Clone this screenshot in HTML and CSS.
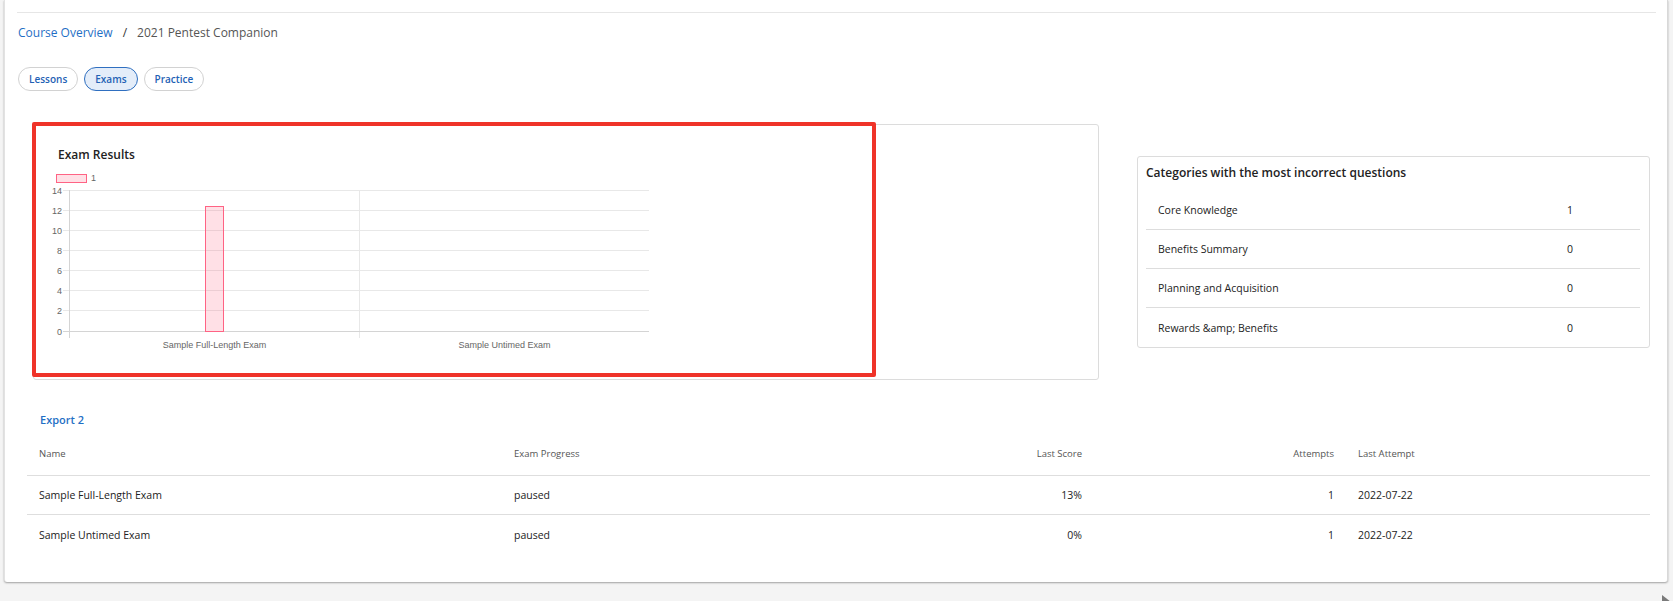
FILE: index.html
```html
<!DOCTYPE html>
<html>
<head>
<meta charset="utf-8">
<title>2021 Pentest Companion - Exams</title>
<link rel="stylesheet" href="styles.css">
</head>
<body>
<div class="page">
  <main class="card">
    <div class="topline"></div>
    <nav class="crumbs">
      <a class="crumb-link">Course Overview</a><span class="sep">/</span><span class="crumb-current">2021 Pentest Companion</span>
    </nav>
    <div class="pills">
      <span class="pill">Lessons</span>
      <span class="pill active">Exams</span>
      <span class="pill">Practice</span>
    </div>

    <div class="stats-row">
      <section class="chart-card">
        <h3 class="chart-title">Exam Results</h3>
        <svg class="chart" width="620" height="195" viewBox="0 0 620 195">
          <rect x="16.5" y="9.5" width="30" height="8" fill="#ffe0e6" stroke="#ff6384" stroke-width="1"/>
          <text class="lbl" x="51" y="16">1</text>
          <g stroke="#e8e8e8" stroke-width="1">
            <line x1="23" y1="25.5" x2="609" y2="25.5"/>
            <line x1="23" y1="45.5" x2="609" y2="45.5"/>
            <line x1="23" y1="65.5" x2="609" y2="65.5"/>
            <line x1="23" y1="85.5" x2="609" y2="85.5"/>
            <line x1="23" y1="105.5" x2="609" y2="105.5"/>
            <line x1="23" y1="125.5" x2="609" y2="125.5"/>
            <line x1="23" y1="145.5" x2="609" y2="145.5"/>
            <line x1="319.5" y1="25" x2="319.5" y2="173"/>
          </g>
          <g stroke="#d4d4d4" stroke-width="1">
            <line x1="23" y1="166.5" x2="609" y2="166.5"/>
            <line x1="29.5" y1="25" x2="29.5" y2="173"/>
          </g>
          <g class="lbl" text-anchor="end">
            <text x="22" y="28.5">14</text>
            <text x="22" y="48.5">12</text>
            <text x="22" y="68.5">10</text>
            <text x="22" y="88.5">8</text>
            <text x="22" y="108.5">6</text>
            <text x="22" y="128.5">4</text>
            <text x="22" y="148.5">2</text>
            <text x="22" y="169.5">0</text>
          </g>
          <rect x="165.5" y="41.5" width="18" height="125" fill="rgba(255,99,132,0.2)" stroke="#ff6384" stroke-width="1"/>
          <g class="lbl" text-anchor="middle">
            <text x="174.5" y="183">Sample Full-Length Exam</text>
            <text x="464.5" y="183">Sample Untimed Exam</text>
          </g>
        </svg>
        <div class="annotation"></div>
      </section>

      <section class="cat-card">
        <h3 class="cat-title">Categories with the most incorrect questions</h3>
        <div class="cat-row"><span class="cat-name">Core Knowledge</span><span class="cat-val">1</span></div>
        <div class="cat-row"><span class="cat-name">Benefits Summary</span><span class="cat-val">0</span></div>
        <div class="cat-row"><span class="cat-name">Planning and Acquisition</span><span class="cat-val">0</span></div>
        <div class="cat-row"><span class="cat-name">Rewards &amp;amp; Benefits</span><span class="cat-val">0</span></div>
      </section>
    </div>

    <div class="exports"><a class="export-link">Export 2</a></div>

    <div class="table">
      <div class="tr th">
        <span class="c-name">Name</span>
        <span class="c-prog">Exam Progress</span>
        <span class="c-score">Last Score</span>
        <span class="c-att">Attempts</span>
        <span class="c-last">Last Attempt</span>
      </div>
      <div class="tr">
        <span class="c-name">Sample Full-Length Exam</span>
        <span class="c-prog">paused</span>
        <span class="c-score">13%</span>
        <span class="c-att">1</span>
        <span class="c-last">2022-07-22</span>
      </div>
      <div class="tr last">
        <span class="c-name">Sample Untimed Exam</span>
        <span class="c-prog">paused</span>
        <span class="c-score">0%</span>
        <span class="c-att">1</span>
        <span class="c-last">2022-07-22</span>
      </div>
    </div>
  </main>
  <div class="corner"></div>
</div>
</body>
</html>
```

FILE: styles.css
```css
* { box-sizing: border-box; }

html, body {
  margin: 0;
  padding: 0;
  background: #f4f4f4;
  font-family: "Open Sans", "Noto Sans", "Liberation Sans", sans-serif;
  color: #222;
}

.page {
  position: relative;
  width: 1673px;
  height: 601px;
  overflow: hidden;
}

.card {
  margin-left: 4px;
  width: 1664px;
  height: 582px;
  background: #fff;
  border-left: 1px solid #e2e2e2;
  border-right: 1px solid #d8d8d8;
  border-radius: 0 0 3px 3px;
  box-shadow: 0 1px 2px rgba(0, 0, 0, 0.35);
  padding: 12px 17px 0 13px;
}

.topline {
  height: 1px;
  background: #e6e6e6;
  margin: 0 -6px 0 -1px;
}

.crumbs {
  margin-top: 12px;
  font-size: 12px;
  line-height: 16px;
  display: flex;
  align-items: center;
}

.crumb-link { color: #1f6fc5; }

.sep {
  color: #333;
  margin: 0 10px;
}

.crumb-current { color: #555; }

.pills {
  margin-top: 26px;
  display: flex;
  gap: 6px;
}

.pill {
  height: 24px;
  line-height: 22px;
  padding: 0 10px;
  border: 1px solid #d2d2d2;
  border-radius: 12px;
  font-size: 10px;
  font-weight: 600;
  color: #1f62b5;
  background: #fff;
}

.pill.active {
  background: #e4edf9;
  border-color: #2f6fc0;
}

.stats-row {
  margin-top: 33px;
  padding-left: 15px;
  display: flex;
  align-items: flex-start;
  gap: 38px;
}

.chart-card {
  position: relative;
  width: 1066px;
  height: 256px;
  border: 1px solid #dcdcdc;
  border-radius: 3px;
  padding: 22px 0 0 6px;
}

.chart-title {
  margin: 0 0 0 18px;
  font-size: 12px;
  font-weight: 600;
  line-height: 16px;
  color: #222;
}

.chart {
  display: block;
  margin-top: 2px;
}

.lbl, .lbl text {
  font-family: "Liberation Sans", Arial, sans-serif;
  font-size: 9px;
  fill: #666;
}

.annotation {
  position: absolute;
  left: -2px;
  top: -3px;
  width: 844px;
  height: 255px;
  border: 4px solid #ef3329;
  border-radius: 2px;
  pointer-events: none;
}

.cat-card {
  margin-top: 32px;
  width: 513px;
  border: 1px solid #dcdcdc;
  border-radius: 3px;
  padding: 8px 9px 0 8px;
}

.cat-title {
  margin: 0 0 10px 0;
  font-size: 12px;
  font-weight: 600;
  line-height: 16px;
  color: #222;
}

.cat-row {
  display: grid;
  grid-template-columns: 1fr 73px;
  height: 39px;
  align-items: center;
  border-bottom: 1px solid #dddddd;
  font-size: 10.5px;
  color: #222;
}

.cat-row:last-child { border-bottom: none; }

.cat-name { padding-left: 12px; }

.exports {
  margin-top: 30px;
  padding-left: 22px;
  line-height: 16px;
}

.export-link {
  font-size: 11px;
  font-weight: 600;
  color: #1f6fc5;
}

.table {
  margin: 5px 0 0 9px;
}

.tr {
  display: grid;
  grid-template-columns: 475px 298px 294px 252px 1fr;
  height: 39px;
  align-items: center;
  border-bottom: 1px solid #dedede;
  font-size: 10.5px;
  color: #222;
}

.tr > span { padding: 0 12px; }

.tr.th {
  height: 43px;
  align-items: start;
  padding-top: 14px;
  font-size: 9.5px;
  color: #555;
  line-height: 14px;
}

.tr.last { border-bottom: none; }

.c-score, .c-att { text-align: right; }

.corner {
  position: absolute;
  left: 1662px;
  top: 595px;
  width: 9px;
  height: 7px;
  background: #7a7a7a;
  clip-path: polygon(0 0, 100% 100%, 0 100%);
}
```
